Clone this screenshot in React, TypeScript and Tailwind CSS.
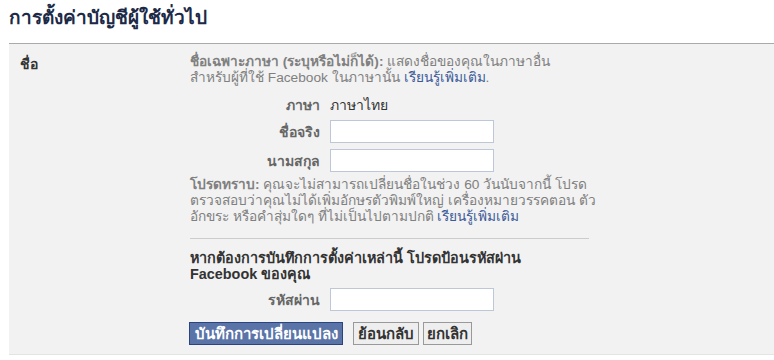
import React from "react";

const Label = ({ children }: { children: React.ReactNode }) => (
  <div className="w-[140px] pr-[10px] text-right font-bold text-[#666]">{children}</div>
);

export default function App() {
  return (
    <div className="w-[774px] h-[360px] overflow-hidden bg-white font-['Liberation_Sans','Noto_Sans',sans-serif] text-[14px] leading-[16px] text-[#333]">
      <h2 className="h-[43px] pl-[9px] pt-[6px] text-[19px] leading-[24px] font-bold text-[#1c2a47]">
        การตั้งค่าบัญชีผู้ใช้ทั่วไป
      </h2>
      <div className="ml-[9px] flex h-[312px] border-t border-b border-t-[#aaaaaa] border-b-[#e4e4e4] bg-[#f2f2f2]">
        <div className="w-[181px] pl-[11px] pt-[12px] font-bold text-[#333]">ชื่อ</div>
        <div className="w-[400px] pt-[10px]">
          <p className="whitespace-nowrap text-[13.7px] text-[#808080]">
            <span className="font-bold">ชื่อเฉพาะภาษา (ระบุหรือไม่ก็ได้):</span> แสดงชื่อของคุณในภาษาอื่น
            <br />
            สำหรับผู้ที่ใช้ Facebook ในภาษานั้น <span className="text-[#3b5998]">เรียนรู้เพิ่มเติม</span>.
          </p>
          <div className="mt-[11px] flex items-center">
            <Label>ภาษา</Label>
            <div>ภาษาไทย</div>
          </div>
          <div className="mt-[7px] flex items-center">
            <Label>ชื่อจริง</Label>
            <input className="h-[23px] w-[164px] border border-[#bdc7d8] bg-white" />
          </div>
          <div className="mt-[6px] flex items-center">
            <Label>นามสกุล</Label>
            <input className="h-[23px] w-[164px] border border-[#bdc7d8] bg-white" />
          </div>
          <p className="mt-[5px] whitespace-nowrap text-[13.7px] text-[#808080]">
            <span className="font-bold">โปรดทราบ:</span> คุณจะไม่สามารถเปลี่ยนชื่อในช่วง 60 วันนับจากนี้ โปรด
            <br />
            ตรวจสอบว่าคุณไม่ได้เพิ่มอักษรตัวพิมพ์ใหญ่ เครื่องหมายวรรคตอน ตัว
            <br />
            อักขระ หรือคำสุ่มใดๆ ที่ไม่เป็นไปตามปกติ <span className="text-[#3b5998]">เรียนรู้เพิ่มเติม</span>
          </p>
          <div className="mt-[13px] h-px w-[399px] bg-[#cccccc]" />
          <p className="mt-[11px] whitespace-nowrap text-[14.4px] font-bold text-[#333]">
            หากต้องการบันทึกการตั้งค่าเหล่านี้ โปรดป้อนรหัสผ่าน
            <br />
            Facebook ของคุณ
          </p>
          <div className="mt-[6px] flex items-center">
            <Label>รหัสผ่าน</Label>
            <input type="password" className="h-[23px] w-[164px] border border-[#bdc7d8] bg-white" />
          </div>
          <div className="mt-[11px] -ml-px flex items-center">
            <button className="h-[23px] w-[154px] border border-[#29447e] bg-[#5b74a8] text-[15px] font-bold text-white">
              บันทึกการเปลี่ยนแปลง
            </button>
            <button className="ml-[10px] h-[23px] w-[66px] border border-[#999999] bg-[#eeeeee] text-[15px] font-bold text-[#333]">
              ย้อนกลับ
            </button>
            <button className="ml-[4px] h-[23px] w-[49px] border border-[#999999] bg-[#eeeeee] text-[15px] font-bold text-[#333]">
              ยกเลิก
            </button>
          </div>
        </div>
      </div>
    </div>
  );
}
